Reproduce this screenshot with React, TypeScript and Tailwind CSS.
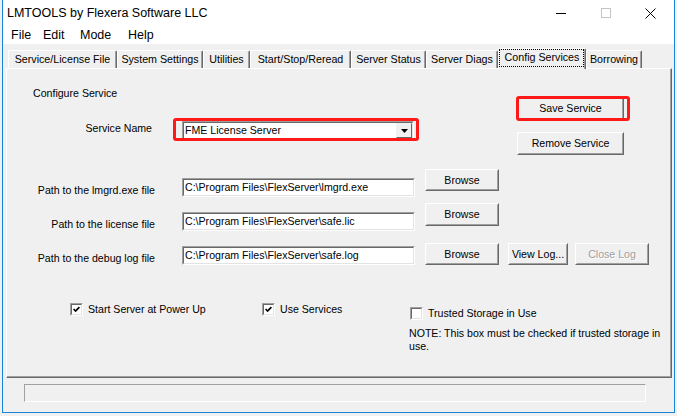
import React from "react";

function Btn({ className, children, disabled }: { className: string; children: React.ReactNode; disabled?: boolean }) {
  return (
    <div className={`${className} shrink-0 border border-t-white border-l-white border-r-[#696969] border-b-[#696969] bg-[#f0f0f0]`}>
      <div className="w-full h-full border border-t-[#f0f0f0] border-l-[#f0f0f0] border-r-[#a0a0a0] border-b-[#a0a0a0] flex items-center justify-center">
        <span className={disabled ? "text-[#a0a0a0] [text-shadow:1px_1px_0_#ffffff]" : "text-black"}>{children}</span>
      </div>
    </div>
  );
}

function Field({ className, children }: { className: string; children?: React.ReactNode }) {
  return (
    <div className={`${className} shrink-0 border border-t-[#a0a0a0] border-l-[#a0a0a0] border-r-white border-b-white`}>
      <div className="w-full h-full border border-t-[#696969] border-l-[#696969] border-r-[#e3e3e3] border-b-[#e3e3e3] bg-white flex items-center pl-[1px] overflow-hidden whitespace-nowrap">
        {children}
      </div>
    </div>
  );
}

function Check({ checked }: { checked: boolean }) {
  return (
    <div className="w-[13px] h-[13px] shrink-0 border border-t-[#a0a0a0] border-l-[#a0a0a0] border-r-white border-b-white">
      <div className="w-full h-full border border-t-[#696969] border-l-[#696969] border-r-[#e3e3e3] border-b-[#e3e3e3] bg-white flex items-center justify-center">
        {checked && (
          <svg width="7" height="7" viewBox="0 0 7 7">
            <path d="M0.6 3 L2.6 5 L6.4 1.2" fill="none" stroke="#000" strokeWidth="1.7" />
          </svg>
        )}
      </div>
    </div>
  );
}

function Tab({ className, children }: { className: string; children: React.ReactNode }) {
  return (
    <div className={`${className} h-[18px] shrink-0 border-t border-l border-r border-t-white border-l-white border-r-[#696969] rounded-t-[2px] shadow-[inset_-1px_0_0_#a0a0a0] flex items-center justify-center whitespace-nowrap`}>
      {children}
    </div>
  );
}

export default function App() {
  return (
    <div className="w-[677px] h-[416px] bg-[#f0f0f0] overflow-hidden font-['Liberation_Sans',Arial,sans-serif] text-black">
      <div className="ml-[2px] w-[673px] h-[413px] border-l border-r border-b border-[#1883d7] bg-[#f0f0f0] flex flex-col">
        {/* Title bar */}
        <div className="h-[26px] bg-white flex items-center shrink-0">
          <div className="pl-[4px] text-[12.5px] flex-1 leading-none">LMTOOLS by Flexera Software LLC</div>
          <div className="flex h-full">
            <div className="w-[45px] h-full flex items-center justify-center">
              <svg width="10" height="10" viewBox="0 0 10 10">
                <line x1="0" y1="5.5" x2="10" y2="5.5" stroke="#000" strokeWidth="1" />
              </svg>
            </div>
            <div className="w-[45px] h-full flex items-center justify-center">
              <svg width="10" height="10" viewBox="0 0 10 10">
                <rect x="0.5" y="0.5" width="9" height="9" fill="none" stroke="#c4c4c4" strokeWidth="1" />
              </svg>
            </div>
            <div className="w-[45px] h-full flex items-center justify-center mr-[1px]">
              <svg width="11" height="11" viewBox="0 0 11 11">
                <line x1="0.5" y1="0.5" x2="10.5" y2="10.5" stroke="#000" strokeWidth="1" />
                <line x1="10.5" y1="0.5" x2="0.5" y2="10.5" stroke="#000" strokeWidth="1" />
              </svg>
            </div>
          </div>
        </div>
        {/* Menu bar */}
        <div className="h-[18px] bg-white flex items-center pl-[8px] text-[12.5px] shrink-0">
          <span className="w-[32px]">File</span>
          <span className="w-[37px]">Edit</span>
          <span className="w-[48px]">Mode</span>
          <span>Help</span>
        </div>
        {/* Tabs */}
        <div className="flex items-end h-[20px] mt-[4px] ml-[5px] relative z-10 text-[10.7px] shrink-0">
          <Tab className="w-[109px]">Service/License File</Tab>
          <Tab className="w-[86px]">System Settings</Tab>
          <Tab className="w-[47px]">Utilities</Tab>
          <Tab className="w-[101px]">Start/Stop/Reread</Tab>
          <Tab className="w-[75px]">Server Status</Tab>
          <Tab className="w-[72px]">Server Diags</Tab>
          <div className="relative w-[88px] h-[21px] -mb-[1px] shrink-0 bg-[#f0f0f0] border-t border-l border-r border-t-white border-l-white border-r-[#696969] rounded-t-[2px] shadow-[inset_-1px_0_0_#a0a0a0] flex items-center justify-center pb-[3px] whitespace-nowrap">
            Config Services
            <div className="absolute left-[0px] right-[1px] top-[0px] bottom-[2px] border border-dotted border-black" />
          </div>
          <Tab className="w-[56px]">Borrowing</Tab>
        </div>
        {/* Panel */}
        <div className="relative ml-[3px] w-[666px] h-[310px] shrink-0 border border-t-white border-l-white border-r-[#696969] border-b-[#696969] shadow-[inset_-1px_-1px_0_#a0a0a0] flex flex-col text-[10.6px] leading-[13px]">
          {/* Section 1 */}
          <div className="flex">
            <div className="w-[510px] flex flex-col">
              <div className="mt-[18px] pl-[26px]">Configure Service</div>
              <div className="mt-[21px] flex items-start">
                <div className="w-[145px] text-right mt-[1px]">Service Name</div>
                <div className="ml-[30px] w-[232px] h-[19px] shrink-0 border border-t-[#a0a0a0] border-l-[#a0a0a0] border-r-white border-b-white">
                  <div className="w-full h-full border border-t-[#696969] border-l-[#696969] border-r-[#e3e3e3] border-b-[#e3e3e3] bg-white flex items-stretch">
                    <div className="flex-1 flex items-center pl-[1px]">FME License Server</div>
                    <div className="w-[16px] shrink-0 border border-t-[#f0f0f0] border-l-[#f0f0f0] border-r-[#696969] border-b-[#696969] bg-[#f0f0f0] flex items-center justify-center">
                      <svg width="7" height="4" viewBox="0 0 7 4">
                        <path d="M0 0 L7 0 L3.5 4 Z" fill="#000" />
                      </svg>
                    </div>
                  </div>
                </div>
              </div>
            </div>
            <div className="pt-[28px] flex flex-col">
              <Btn className="w-[107px] h-[23px]">Save Service</Btn>
              <div className="mt-[12px]">
                <Btn className="w-[107px] h-[23px]">Remove Service</Btn>
              </div>
            </div>
          </div>
          {/* Path rows */}
          <div className="mt-[14px] flex items-start h-[28px]">
            <div className="w-[148px] text-right mt-[15px] shrink-0">Path to the lmgrd.exe file</div>
            <div className="ml-[27px] mt-[9px]">
              <Field className="w-[233px] h-[19px]">C:\Program Files\FlexServer\lmgrd.exe</Field>
            </div>
            <div className="ml-[10px]">
              <Btn className="w-[74px] h-[22px]">Browse</Btn>
            </div>
          </div>
          <div className="mt-[6px] flex items-start h-[28px]">
            <div className="w-[148px] text-right mt-[15px] shrink-0">Path to the license file</div>
            <div className="ml-[27px] mt-[9px]">
              <Field className="w-[233px] h-[19px]">C:\Program Files\FlexServer\safe.lic</Field>
            </div>
            <div className="ml-[10px]">
              <Btn className="w-[74px] h-[23px]">Browse</Btn>
            </div>
          </div>
          <div className="mt-[12px] flex items-start h-[22px]">
            <div className="w-[148px] text-right mt-[9px] shrink-0">Path to the debug log file</div>
            <div className="ml-[27px] mt-[3px]">
              <Field className="w-[233px] h-[19px]">C:\Program Files\FlexServer\safe.log</Field>
            </div>
            <div className="ml-[10px]">
              <Btn className="w-[74px] h-[22px]">Browse</Btn>
            </div>
            <div className="ml-[9px]">
              <Btn className="w-[60px] h-[22px]">View Log...</Btn>
            </div>
            <div className="ml-[7px]">
              <Btn className="w-[74px] h-[22px]" disabled>Close Log</Btn>
            </div>
          </div>
          {/* Checkboxes */}
          <div className="mt-[38px] flex items-start">
            <div className="ml-[63px] w-[192px] flex items-center h-[13px]">
              <Check checked />
              <span className="ml-[5px] whitespace-nowrap">Start Server at Power Up</span>
            </div>
            <div className="w-[148px] flex items-center h-[13px]">
              <Check checked />
              <span className="ml-[5px] whitespace-nowrap">Use Services</span>
            </div>
            <div className="mt-[4px] flex flex-col">
              <div className="flex items-center h-[13px]">
                <Check checked={false} />
                <span className="ml-[5px] whitespace-nowrap">Trusted Storage in Use</span>
              </div>
              <div className="mt-[7px] -ml-[1px] whitespace-nowrap">
                NOTE: This box must be checked if trusted storage in
                <br />
                use.
              </div>
            </div>
          </div>
          {/* Red annotation overlays */}
          <div className="absolute left-[509px] top-[27px] w-[114px] h-[25px] border-[3px] border-[#ff1a1a] rounded-[3px] pointer-events-none" />
          <div className="absolute left-[166px] top-[49px] w-[246px] h-[23px] border-[3px] border-[#ff1a1a] rounded-[3px] pointer-events-none" />
        </div>
        {/* Status bar */}
        <div className="mt-[6px] ml-[21px] w-[622px] h-[18px] shrink-0 border border-t-[#a0a0a0] border-l-[#a0a0a0] border-r-white border-b-white" />
      </div>
    </div>
  );
}
